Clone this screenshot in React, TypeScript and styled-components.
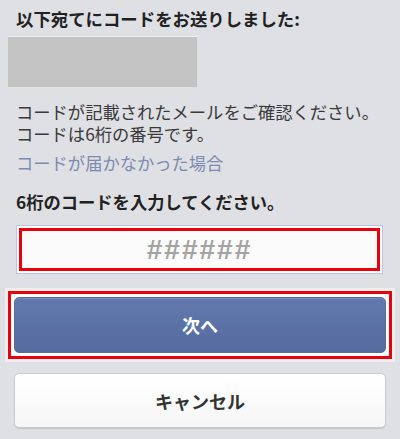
import styled, { createGlobalStyle } from "styled-components";

const GlobalStyle = createGlobalStyle`
    html, body {
        margin: 0;
        padding: 0;
        background: #dfe0e4;
    }
    body {
        font-family: "Noto Sans CJK JP", "Noto Sans", sans-serif;
        color: #333;
    }
`;

const Container = styled.div`
    width: 400px;
    height: 439px;
    box-sizing: border-box;
    padding: 8px;
    display: flex;
    flex-direction: column;
`;

const Title = styled.h1`
    margin: 0 0 0 8px;
    font-size: 17.4px;
    line-height: 22px;
    font-weight: 700;
    color: #222;
`;

const Masked = styled.div`
    width: 189px;
    height: 50px;
    margin-top: 7px;
    background: #c3c3c3;
    box-shadow: 0 -1px 0 rgba(255, 255, 255, 0.5);
`;

const Message = styled.div`
    margin: 14px 0 0 8px;
    display: flex;
    flex-direction: column;
`;

const Line = styled.span`
    display: block;
    height: 22px;
    font-size: 17.3px;
    line-height: 22px;
    color: #3a3a3a;
`;

const HelpLink = styled.a`
    margin: 7px 0 0 8px;
    font-size: 17.3px;
    line-height: 22px;
    color: #7d8bb0;
    text-decoration: none;
`;

const Label = styled.h2`
    margin: 17px 0 0 8px;
    font-size: 17.3px;
    line-height: 22px;
    font-weight: 700;
    color: #222;
`;

const InputFrame = styled.div`
    margin: 12px 9px 0 8px;
    border: 1px solid #b7c6e2;
    padding: 2px;
    background: #fff;
`;

const CodeInput = styled.input`
    display: block;
    width: 100%;
    height: 43px;
    box-sizing: border-box;
    border: 3px solid #e8000b;
    background: #fbfbfb;
    text-align: center;
    font-family: "Liberation Sans", Arial, sans-serif;
    font-size: 28px;
    font-weight: 700;
    letter-spacing: 2px;
    outline: none;
    &::placeholder {
        color: #a3a3a3;
    }
`;

const Highlight = styled.div`
    margin-top: 17px;
    border: 3px solid #e8000b;
    padding: 3px;
    background: #fff;
    box-shadow: 0 0 0 3px rgba(255, 255, 255, 0.45);
`;

const Button = styled.button<{ $primary?: boolean }>`
    display: flex;
    align-items: center;
    justify-content: center;
    width: 100%;
    height: ${(p) => (p.$primary ? "56px" : "55px")};
    box-sizing: border-box;
    border-radius: 5px;
    font-family: "Noto Sans CJK JP", sans-serif;
    font-size: 18px;
    font-weight: 700;
    cursor: pointer;
    border: 1px solid ${(p) => (p.$primary ? "#566b9c" : "#c9cace")};
    color: ${(p) => (p.$primary ? "#fff" : "#333")};
    background: ${(p) =>
        p.$primary
            ? "linear-gradient(#6179ad, #566b9f)"
            : "linear-gradient(#ffffff, #f6f6f7)"};
    box-shadow: ${(p) =>
        p.$primary
            ? "inset 0 1px 0 rgba(255,255,255,0.15)"
            : "0 1px 1px rgba(0,0,0,0.12)"};
`;

const CancelWrap = styled.div`
    margin: 14px 6px 0;
`;

function App() {
    return (
        <Container>
            <GlobalStyle />
            <Title>以下宛てにコードをお送りしました:</Title>
            <Masked />
            <Message>
                <Line>コードが記載されたメールをご確認ください。</Line>
                <Line>コードは6桁の番号です。</Line>
            </Message>
            <HelpLink href="#">コードが届かなかった場合</HelpLink>
            <Label>6桁のコードを入力してください。</Label>
            <InputFrame>
                <CodeInput placeholder="######" />
            </InputFrame>
            <Highlight>
                <Button $primary>次へ</Button>
            </Highlight>
            <CancelWrap>
                <Button>キャンセル</Button>
            </CancelWrap>
        </Container>
    );
}

export default App;
